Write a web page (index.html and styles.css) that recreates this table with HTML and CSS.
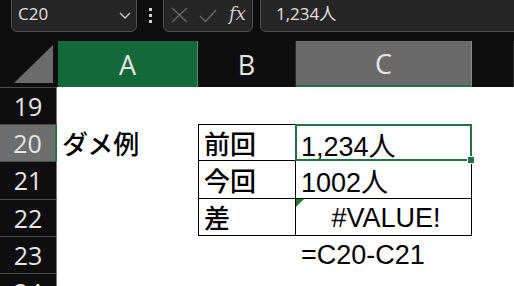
FILE: index.html
```html
<!DOCTYPE html>
<html lang="ja">

<head>
    <meta charset="UTF-8">
    <meta name="viewport" content="width=device-width, initial-scale=1.0">
    <title>ダメ例</title>
    <link rel="stylesheet" href="styles.css">
</head>

<body>
    <div class="toolbar">
        <div class="namebox">
            <span>C20</span>
            <svg class="chevron" width="12" height="7" viewBox="0 0 12 7">
                <path d="M1 1 L6 6 L11 1" fill="none" stroke="#cfcfcf" stroke-width="1.3" />
            </svg>
        </div>
        <div class="dots"><i></i><i></i><i></i></div>
        <div class="fxbox">
            <svg width="17" height="16" viewBox="0 0 17 16">
                <path d="M1 1 L16 15 M16 1 L1 15" stroke="#6a6a6a" stroke-width="1.3" />
            </svg>
            <svg width="18" height="14" viewBox="0 0 18 14">
                <path d="M1 7 L6.5 12.5 L17 1" fill="none" stroke="#6a6a6a" stroke-width="1.3" />
            </svg>
            <span class="fx">fx</span>
        </div>
        <div class="formula">1,234人</div>
    </div>

    <div class="sheet">
        <!-- column headers -->
        <div class="corner"><span></span></div>
        <div class="colhead col-a">A</div>
        <div class="colhead">B</div>
        <div class="colhead col-active">C</div>
        <div class="colhead"></div>

        <!-- 19 -->
        <div class="rowhead">19</div>
        <div class="cell"></div>
        <div class="cell"></div>
        <div class="cell"></div>
        <div class="cell"></div>

        <!-- 20 -->
        <div class="rowhead row-active">20</div>
        <div class="cell jp">ダメ例</div>
        <div class="cell boxed first left jp">前回</div>
        <div class="cell boxed first selected">1,234人</div>
        <div class="cell"></div>

        <!-- 21 -->
        <div class="rowhead">21</div>
        <div class="cell"></div>
        <div class="cell boxed left jp">今回</div>
        <div class="cell boxed">1002人</div>
        <div class="cell"></div>

        <!-- 22 -->
        <div class="rowhead">22</div>
        <div class="cell"></div>
        <div class="cell boxed left jp">差</div>
        <div class="cell boxed error center">#VALUE!</div>
        <div class="cell"></div>

        <!-- 23 -->
        <div class="rowhead">23</div>
        <div class="cell"></div>
        <div class="cell"></div>
        <div class="cell">=C20-C21</div>
        <div class="cell"></div>

        <!-- 24 -->
        <div class="rowhead">24</div>
        <div class="cell"></div>
        <div class="cell"></div>
        <div class="cell"></div>
        <div class="cell"></div>
    </div>
</body>

</html>
```

FILE: styles.css
```css
* {
    margin: 0;
    padding: 0;
    box-sizing: border-box;
}

body {
    width: 514px;
    height: 286px;
    overflow: hidden;
    background: #ffffff;
    font-family: 'Liberation Sans', 'Noto Sans CJK JP', sans-serif;
}

/* formula bar */

.toolbar {
    display: flex;
    align-items: flex-end;
    height: 41px;
    padding-bottom: 9px;
    background: #0e0e0e;
    overflow: hidden;
}

.namebox,
.fxbox,
.formula {
    height: 42px;
    background: #262626;
    border: 1px solid #4e4e4e;
    border-radius: 6px;
    color: #e0e0e0;
}

.namebox {
    display: flex;
    align-items: flex-end;
    justify-content: space-between;
    width: 126px;
    margin-left: 11px;
    padding: 0 5px 6px 6px;
    font-family: 'Open Sans', sans-serif;
    font-size: 17px;
}

.chevron {
    margin-bottom: 6px;
}

.dots {
    display: flex;
    flex-direction: column;
    gap: 3px;
    width: 26px;
    padding-bottom: 9px;
    align-items: center;
}

.dots i {
    display: block;
    width: 3px;
    height: 3px;
    background: #d0d0d0;
}

.fxbox {
    display: flex;
    align-items: flex-end;
    gap: 11px;
    width: 90px;
    padding: 0 0 7px 7px;
}

.fxbox svg {
    margin-bottom: 1px;
}

.fx {
    font-family: 'DejaVu Serif', serif;
    font-style: italic;
    font-size: 18px;
    line-height: 20px;
    color: #cfcfcf;
    margin-left: 1px;
}

.formula {
    flex: 1;
    margin-left: 7px;
    margin-right: -8px;
    padding: 0 0 6px 15px;
    display: flex;
    align-items: flex-end;
    font-family: 'Open Sans', 'Noto Sans CJK JP', sans-serif;
    font-size: 17px;
}

/* grid */

.sheet {
    display: grid;
    grid-template-columns: 57px 141px 98px 176px 1fr;
    grid-template-rows: 46px repeat(6, 37.2px);
}

.corner {
    background: #0e0e0e;
    padding: 4px 4px 4px 14px;
}

.corner span {
    display: block;
    width: 39px;
    height: 38px;
    background: #6b6b6b;
    clip-path: polygon(100% 0, 100% 100%, 0 100%);
}

.colhead {
    display: flex;
    align-items: center;
    justify-content: center;
    background: #0e0e0e;
    color: #e6e6e6;
    font-family: 'Open Sans', sans-serif;
    font-size: 27px;
    border-right: 1px solid #2a2a2a;
}

.col-a {
    background: #13693a;
    border-left: 1px solid #0e0e0e;
    border-right: 1px solid #5a8a6a;
}

.col-active {
    background: #6a6a6a;
    border-bottom: 2px solid #217346;
    border-right: 1px solid #8a8a8a;
}

.rowhead {
    display: flex;
    align-items: center;
    justify-content: center;
    background: #0e0e0e;
    color: #e6e6e6;
    font-family: 'Open Sans', sans-serif;
    font-size: 25px;
    border-top: 1px solid #4a4a4a;
    border-right: 1px solid #7a7a7a;
}

.row-active {
    background: #6d6d6d;
    border-right: 2px solid #217346;
}

.cell {
    display: flex;
    align-items: center;
    padding: 3px 0 0 5px;
    font-size: 27px;
    color: #000000;
    white-space: nowrap;
}

.jp {
    font-family: 'Noto Sans CJK JP', sans-serif;
    font-weight: 500;
    font-size: 26px;
    padding-top: 0;
}

.center {
    justify-content: center;
}

.boxed {
    border-right: 1px solid #000000;
    border-bottom: 1px solid #000000;
}

.first {
    border-top: 1px solid #000000;
}

.left {
    border-left: 1px solid #000000;
}

.selected,
.error {
    position: relative;
}

/* active cell frame and fill handle */
.selected::after {
    content: '';
    position: absolute;
    inset: -1px;
    border: 2px solid #217346;
}

.selected::before {
    content: '';
    position: absolute;
    right: -4px;
    bottom: -4px;
    width: 6px;
    height: 6px;
    background: #217346;
    border: 1px solid #ffffff;
    z-index: 1;
}

/* error indicator */
.error::before {
    content: '';
    position: absolute;
    left: 0;
    top: 0;
    border-top: 8px solid #1e7b34;
    border-right: 8px solid transparent;
}
```
